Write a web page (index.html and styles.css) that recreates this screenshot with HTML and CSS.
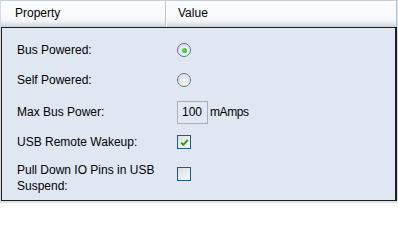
FILE: index.html
```html
<!DOCTYPE html>
<html>
<head>
<meta charset="utf-8">
<link rel="stylesheet" href="styles.css">
</head>
<body>
<div class="grid">
  <div class="header">
    <div class="col col-prop">Property</div>
    <div class="col col-val">Value</div>
  </div>
  <div class="panel">
    <div class="row r1">
      <div class="label">Bus Powered:</div>
      <div class="value"><span class="radio checked"><span class="dot"></span></span></div>
    </div>
    <div class="row r2">
      <div class="label">Self Powered:</div>
      <div class="value"><span class="radio"></span></div>
    </div>
    <div class="row r3">
      <div class="label">Max Bus Power:</div>
      <div class="value"><span class="textbox">100</span><span class="unit">mAmps</span></div>
    </div>
    <div class="row r4">
      <div class="label">USB Remote Wakeup:</div>
      <div class="value"><span class="check"><svg width="11" height="11" viewBox="0 0 11 11"><path d="M2.2 5.6 L4.4 7.8 L8.8 2.8" fill="none" stroke="#21a121" stroke-width="2"/></svg></span></div>
    </div>
    <div class="row r5">
      <div class="label">Pull Down IO Pins in USB Suspend:</div>
      <div class="value top"><span class="check"></span></div>
    </div>
  </div>
</div>
</body>
</html>
```
FILE: styles.css
```css
html, body {
  margin: 0;
  padding: 0;
  background: #ffffff;
}
body {
  font-family: "Liberation Sans", Arial, sans-serif;
  font-size: 12px;
  color: #000;
}
.grid {
  width: 398px;
  height: 203px;
  box-sizing: border-box;
  border-top: 1px solid #c8ced8;
  border-left: 1px solid #d6dbe3;
  border-right: 1px solid #d6dbe3;
  border-bottom: 2px solid #dde2ea;
  background: #f2f4f8;
  display: flex;
  flex-direction: column;
}
.header {
  height: 26px;
  box-sizing: border-box;
  display: flex;
  background: linear-gradient(#fbfcfe 0%, #f7f9fc 70%, #eef0f5 80%, #dcdfe6 92%, #c9ccd4 100%);
  border-right: 1px solid #b3c2d6;
}
.col {
  display: flex;
  align-items: center;
  padding-bottom: 3px;
  box-sizing: border-box;
}
.col-prop {
  width: 165px;
  padding-left: 14px;
  border-right: 1px solid #b6c5d8;
  box-shadow: 1px 0 0 #ffffff;
}
.col-val {
  flex: 1;
  padding-left: 12px;
}
.panel {
  flex: 1;
  border: 1px solid #1e1e1e;
  border-right-width: 2px;
  background: #dfe7f3;
  padding: 12px 0 0 15px;
  display: flex;
  flex-direction: column;
}
.row {
  display: flex;
  align-items: center;
}
.label {
  width: 160px;
  flex: none;
}
.value {
  display: flex;
  align-items: center;
}
.r1 { height: 20px; }
.r2 { height: 20px; margin-top: 10px; }
.r3 { height: 24px; margin-top: 10px; }
.r4 { height: 20px; margin-top: 8px; }
.r5 { margin-top: 10px; align-items: flex-start; }
.r5 .label { line-height: 16px; width: 150px; margin-right: 10px; }
.value.top { padding-top: 5px; }
.radio {
  width: 14px;
  height: 14px;
  box-sizing: border-box;
  border-radius: 50%;
  border: 1px solid #4f74a0;
  background: radial-gradient(circle at 65% 70%, #ffffff 0%, #f1f1f1 35%, #d6d8dc 100%);
  display: flex;
  align-items: center;
  justify-content: center;
}
.radio .dot {
  width: 5px;
  height: 5px;
  border-radius: 50%;
  background: radial-gradient(circle at 40% 40%, #6ee06e, #1aa01a);
}
.textbox {
  width: 31px;
  height: 23px;
  box-sizing: border-box;
  border: 1px solid #a7afb9;
  background: #e2e9f4;
  display: flex;
  align-items: center;
  padding-left: 4px;
  font-size: 12px;
}
.unit {
  margin-left: 2px;
  font-size: 12px;
  letter-spacing: -0.4px;
}
.check {
  width: 14px;
  height: 14px;
  box-sizing: border-box;
  border: 1px solid #1f5a8c;
  background: linear-gradient(135deg, #dcdcdc 0%, #ececec 50%, #fafafa 100%);
  display: flex;
  align-items: center;
  justify-content: center;
}
.check svg { display: block; }
```
